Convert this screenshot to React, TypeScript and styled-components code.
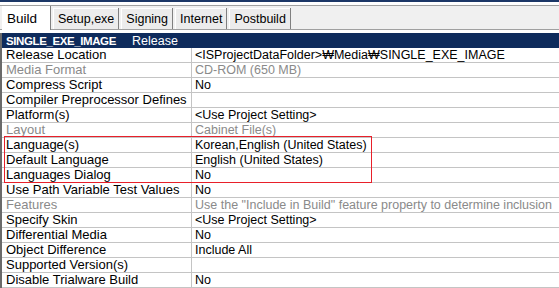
import styled, { createGlobalStyle } from 'styled-components';

interface Prop {
  name: string;
  value: string;
  disabled?: boolean;
}

const tabs = ['Build', 'Setup,exe', 'Signing', 'Internet', 'Postbuild'];

const before: Prop[] = [
  { name: 'Release Location', value: '<ISProjectDataFolder>₩Media₩SINGLE_EXE_IMAGE' },
  { name: 'Media Format', value: 'CD-ROM (650 MB)', disabled: true },
  { name: 'Compress Script', value: 'No' },
  { name: 'Compiler Preprocessor Defines', value: '' },
  { name: 'Platform(s)', value: '<Use Project Setting>' },
  { name: 'Layout', value: 'Cabinet File(s)', disabled: true },
];

const languages: Prop[] = [
  { name: 'Language(s)', value: 'Korean,English (United States)' },
  { name: 'Default Language', value: 'English (United States)' },
  { name: 'Languages Dialog', value: 'No' },
];

const after: Prop[] = [
  { name: 'Use Path Variable Test Values', value: 'No' },
  {
    name: 'Features',
    value: 'Use the "Include in Build" feature property to determine inclusion',
    disabled: true,
  },
  { name: 'Specify Skin', value: '<Use Project Setting>' },
  { name: 'Differential Media', value: 'No' },
  { name: 'Object Difference', value: 'Include All' },
  { name: 'Supported Version(s)', value: '' },
  { name: 'Disable Trialware Build', value: 'No' },
];

const PropRow: React.FC<{ item: Prop }> = ({ item }) => (
  <Row $disabled={item.disabled}>
    <NameCell>{item.name}</NameCell>
    <ValueCell>{item.value}</ValueCell>
  </Row>
);

const App: React.FC = () => {
  return (
    <>
      <GlobalStyle />
      <Page>
        <TopRule />
        <TabStrip>
          {tabs.map((t, i) => (
            <Tab key={t} $active={i === 0}>
              {t}
            </Tab>
          ))}
        </TabStrip>
        <Grid>
          <Header>
            <ReleaseName>SINGLE_EXE_IMAGE</ReleaseName>
            <span>Release</span>
          </Header>
          {before.map(p => (
            <PropRow key={p.name} item={p} />
          ))}
          <Highlight>
            {languages.map(p => (
              <PropRow key={p.name} item={p} />
            ))}
          </Highlight>
          {after.map(p => (
            <PropRow key={p.name} item={p} />
          ))}
        </Grid>
      </Page>
    </>
  );
};

export default App;

const GlobalStyle = createGlobalStyle`
  body {
    margin: 0;
    background: #ffffff;
    font-family: "Liberation Sans", Arial, sans-serif;
    font-size: 12.5px;
    color: #000000;
  }
`;

const Page = styled.div`
  width: 559px;
  height: 288px;
  overflow: hidden;
  background: #ffffff;
`;

const TopRule = styled.div`
  height: 2px;
  background: #1c3767;
`;

const TabStrip = styled.div`
  display: flex;
  align-items: flex-end;
  margin-top: 3px;
  height: 23px;
  padding-left: 2px;
  background: #f0f0f0;
  border-top: 1px solid #a0a0a0;
  border-bottom: 1px solid #a0a0a0;
`;

const Tab = styled.div<{ $active?: boolean }>`
  display: flex;
  align-items: center;
  height: ${p => (p.$active ? '24px' : '21px')};
  margin-bottom: ${p => (p.$active ? '-1px' : '0')};
  padding: 0 ${p => (p.$active ? '13px' : '4px')} 0 4px;
  margin-right: 2px;
  background: ${p => (p.$active ? '#ffffff' : '#ececec')};
  border-left: 1px solid #ffffff;
  border-right: 1px solid #808080;
  box-shadow: ${p => (p.$active ? 'none' : 'inset 0 1px 0 #ffffff')};
  font-size: ${p => (p.$active ? '13.5px' : '12.5px')};
  white-space: nowrap;
`;

const Grid = styled.div`
  margin-top: 3px;
  border-left: 2px solid #6a6a6a;
`;

const Header = styled.div`
  display: flex;
  align-items: center;
  height: 15px;
  padding-left: 4px;
  background: #0e2b5c;
  color: #ffffff;
  white-space: nowrap;
`;

const ReleaseName = styled.span`
  flex: 0 0 126px;
  font-size: 11.5px;
  font-weight: bold;
  letter-spacing: -0.4px;
`;

const Row = styled.div<{ $disabled?: boolean }>`
  display: grid;
  grid-template-columns: 190px 1fr;
  height: 15px;
  box-sizing: border-box;
  border-bottom: 1px solid #c4c4c4;
  color: ${p => (p.$disabled ? '#8a8a8a' : '#000000')};
  line-height: 14px;
  white-space: nowrap;
`;

const NameCell = styled.div`
  padding-left: 4px;
  border-right: 1px solid #c4c4c4;
  font-size: 13px;
  overflow: hidden;
`;

const ValueCell = styled.div`
  padding-left: 3px;
  overflow: hidden;
`;

const Highlight = styled.div`
  position: relative;
  &::after {
    content: '';
    position: absolute;
    left: 2px;
    top: -2px;
    width: 366px;
    bottom: 0;
    border: 1px solid #e8202a;
    pointer-events: none;
  }
`;
